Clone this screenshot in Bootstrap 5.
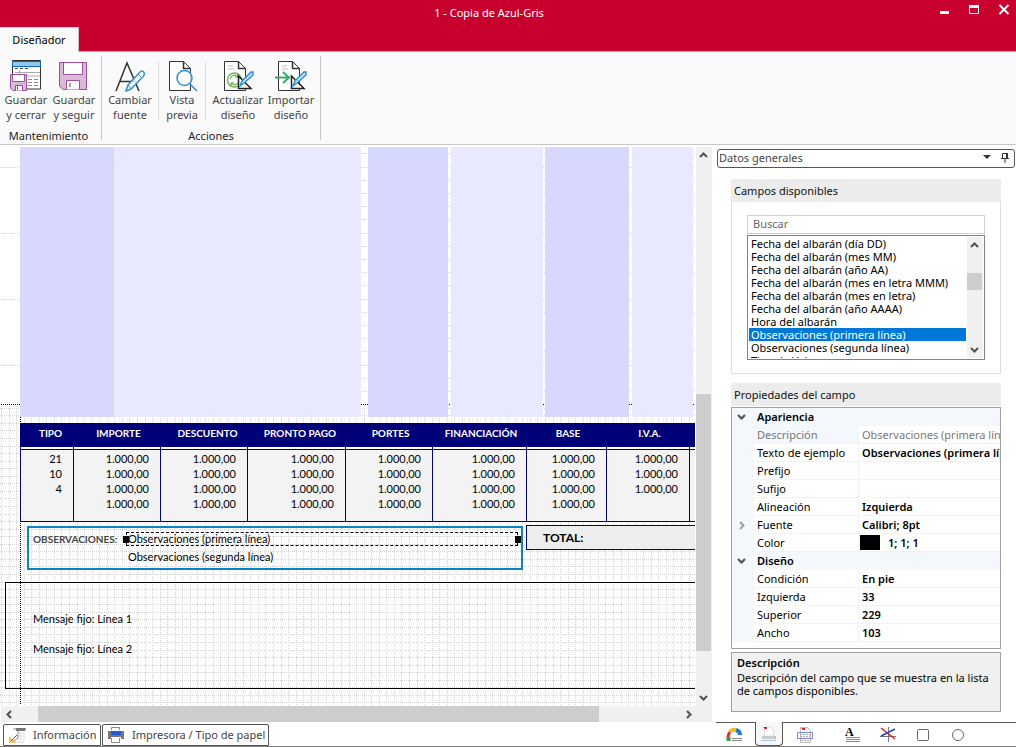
<!DOCTYPE html>
<html lang="es">
<head>
<meta charset="utf-8">
<meta name="viewport" content="width=device-width, initial-scale=1">
<title>1 - Copia de Azul-Gris</title>
<link href="https://cdn.jsdelivr.net/npm/bootstrap@5.3.0/dist/css/bootstrap.min.css" rel="stylesheet">
<style>
:root{--red:#c8002d;--navy:#000078;--line:#c6c6c6}
body{font-family:"Noto Sans","Open Sans",sans-serif;font-size:11px;line-height:15px;color:#000;background:#fff}
button{font:inherit;color:inherit;background:none;border:0;padding:0}
svg{display:block;flex:none}
.app{min-height:100vh;border-bottom:1px solid #808080}
.titlebar{background:var(--red);color:#fff;height:27px}
.titlebar .side-l{width:54px}.titlebar .side-r{width:92px;padding:4px 6px 0 14px}
.title{padding-top:5px}
.tabrow{background:var(--red);height:25px}
.tabrow .grow-line{border-bottom:1px solid #c9a9b0}
.tab-main{width:79px;background:#fafafa;border-top:1px solid #ddd;border-right:1px solid var(--line);padding-bottom:2px}
.ribbon{background:#fafafa;border-bottom:1px solid var(--line);height:93px;padding-top:4px}
.rgroup{border-right:1px solid var(--line);height:84px}
.rbtn{display:flex;flex-direction:column;align-items:center;color:#444;text-align:center;padding-top:4px}
.w48{width:48px}.w56{width:56px}.w44{width:46px}
.rcap{color:#222;margin-top:6px;text-align:center}
.rsep{width:1px;height:58px;background:#dcdcdc;margin-top:6px}
.left{padding-top:2px;min-width:0}
.viewport{overflow:hidden;min-width:0}
.gridbg{position:absolute;left:0;top:0;z-index:0}
.sheet{width:1000px;position:relative;z-index:1;font-family:Lato,sans-serif;font-size:11px}
.bands{height:270px;padding-left:20px}
.bands div{height:270px}
.dk{background:#d8d8ff}.lt{background:#e8e8ff}
.tax{table-layout:fixed;width:759px;margin:6px 0 0 20px;border-collapse:separate;border-spacing:0;background:#f3f3f3;border-bottom:1px solid var(--navy)}
.tax th{background:var(--navy);color:#fff;height:24px;text-align:center;padding:0 0 4px 4px;font-size:10px}
.tax td{border-left:1px solid var(--navy);text-align:right;padding:0 11px 0 0;height:15px;line-height:15px}
.tax .gap td{height:3px;line-height:0;background:#fff;border-bottom:1px solid var(--navy)}
.tax .first td{padding-top:1px}.tax .last td{padding-bottom:10px;height:25px}
.obsrow{margin-top:3px;padding-left:27px}
.obs{width:496px;height:44px;border:2px solid #0a84c6;margin-top:1px;padding:4px 2px 0 4px}
.obs-lab{color:#444;font-weight:700;font-size:10px;width:93px;line-height:14px}
.selbox{width:392px;height:14px;line-height:12px;border:1px dashed #000;padding-left:1px;position:relative}
.selbox::before,.selbox::after{content:"";position:absolute;width:6px;height:7px;background:#000;top:3px}
.selbox::before{left:-4px}.selbox::after{right:-4px}
.obs2{margin:4px 0 0 95px;line-height:14px}
.total{width:300px;height:25px;border:1px solid #000090;background:#eee;margin-left:3px;padding-left:16px;font-weight:700;font-size:12px;line-height:24px}
.fixedbox{border:1px solid #000;margin:12px 0 0 5px;height:107px;padding:28px 0 0 27px}
.fixedbox p{margin:0 0 15px}
.sbv{width:16px;background:#f0f0f0;margin-left:1px}
.sbh{height:16px;background:#f0f0f0;margin-left:1px}
.thumb{background:#cdcdcd}
.sbtn{width:15px;height:16px;display:flex;align-items:center;justify-content:center;flex:none}
.btabs{padding:2px 0 0 3px;gap:1px;height:24px}
.btab{border:1px solid #555;border-radius:2px 2px 0 0;display:flex;align-items:center;color:#444;height:22px;padding-bottom:1px}
.right{width:300px;padding-top:4px;margin-left:4px}
.dock{height:19px;border:1px solid #555;border-radius:3px;color:#444;margin:0 1px;padding:0 3px 2px 1px}
.pbox{margin:0 15px}
.phead{background:#ececec;height:23px;line-height:23px;padding-left:3px;font-size:11px;font-weight:400;margin:0;color:#111}
.pbody{border:1px solid #ddd;border-top:0;padding:13px 15px}
.search{width:100%;height:19px;border:1px solid #d0d0d0;padding:0 5px 2px;outline:0;display:block;border-radius:0}
.search::placeholder{color:#666;opacity:1}
.lbox{border:1px solid #82828f;margin-top:1px;height:125px;padding:1px}
.lbox ul{overflow:hidden;height:121px}
.lbox li{line-height:13px;height:13px;padding-left:2px;white-space:nowrap}
.lbox .sel{background:#0078d7;color:#fff}
.pg{border:1px solid #a0a0a0;margin-top:1px;height:242px;overflow:hidden}
.pg table{width:100%;table-layout:fixed;border-collapse:separate;border-spacing:0}
.pg td,.pg th{height:18px;line-height:17px;padding:0 0 0 3px;white-space:nowrap;overflow:hidden;font-weight:400}
.pg th{text-align:left}
.pg tr>:first-child{background:#f4f7fc;padding:0 0 0 5px}
.pg .cat th{background:#f4f7fc;font-weight:600;padding-bottom:1px}
.pg .it th,.pg .it td:last-child{border-bottom:1px solid #f0f3fa}
.pg .it td:last-child{border-left:1px solid #f0f3fa;font-weight:600}
.pg .ro th{background:#f4f7fc;color:#777}.pg .it.ro td:last-child{color:#777;font-weight:400}
.swatch{display:inline-block;width:20px;height:15px;background:#000;margin:1px 8px 0 -2px;vertical-align:top}
.desc{border:1px solid #a0a0a0;background:#f0f0f0;height:60px;margin-top:3px;padding:2px 5px;line-height:13px}
.desc b{display:block;line-height:16px;font-weight:600}
.icotabs{border-top:1px solid #555;height:24px;margin-top:10px}
.ico{display:flex;justify-content:center;padding-top:4px;width:35px;height:23px}
.ico.on{border:1px solid #555;border-top:0;border-radius:0 0 4px 4px;background:#f7f7fb;margin-top:-1px;width:28px;height:24px}
.ico-gap{margin-left:13px}
</style>
</head>
<body>
<svg width="0" height="0" class="position-absolute"><defs>
<symbol id="up" viewBox="0 0 9 6"><path d="M1 5 4.500 1.500 8 5" fill="none" stroke="#505050" stroke-width="2"/></symbol>
<symbol id="dn" viewBox="0 0 9 6"><path d="M1 1 4.500 4.500 8 1" fill="none" stroke="#505050" stroke-width="2"/></symbol>
<symbol id="floppy" viewBox="0 0 28 28"><path d="M.5.5h27v27H4L.5 24z" fill="#dcb8d8" stroke="#9b4f9b"/><path d="M4.500.5h19v12h-19zM7.500 27.500v-9h13v9" fill="#fff" stroke="#9b4f9b"/><path d="M11 21v4" stroke="#444"/></symbol>
<symbol id="page" viewBox="0 0 22 30"><path d="M.5.5h14l7 7v22H.5z" fill="#fff" stroke="#333"/><path d="M14.500.5v7h7" fill="none" stroke="#333" stroke-width="1.500"/></symbol>
</defs></svg>
<div class="app d-flex flex-column">
<header>
  <div class="titlebar d-flex">
    <span class="side-l"></span>
    <div class="flex-grow-1 text-center title">1 - Copia de Azul-Gris</div>
    <div class="side-r d-flex justify-content-between align-items-start">
      <button aria-label="Minimizar"><svg width="12" height="12"><path d="M2 7h9v3H2z" fill="#fff"/></svg></button>
      <button aria-label="Maximizar"><svg width="12" height="12"><path d="M1.500 2v7.500h9V2" fill="none" stroke="#fff"/><path d="M1 1h10v3H1z" fill="#fff"/></svg></button>
      <button aria-label="Cerrar"><svg width="12" height="12"><path d="M1.500 1l9 9m0-9l-9 9" stroke="#fff" stroke-width="2"/></svg></button>
    </div>
  </div>
  <nav class="tabrow d-flex"><button class="tab-main">Diseñador</button><span class="flex-grow-1 grow-line"></span></nav>
  <div class="ribbon d-flex">
    <section class="rgroup" style="width:102px">
      <div class="d-flex">
        <button class="rbtn w48 ps-1"><svg width="32" height="32"><path d="M2.500.5h28v28.500h-28z" fill="#fff" stroke="#333"/><path d="M2.500 1.500h28v5h-28z" fill="#90c8f0" stroke="#1268b0"/><path d="M5 12.500h25M9.500 10v19M10 16h20" stroke="#aaa"/><path d="M5 8.500h3m2 0h3m2 0h3" stroke="#444"/><path d="M18 19.500h10m-10 3h10m-10 3h10" stroke="#888" stroke-dasharray="4 2"/><path d="M.5 14.500h16v16H3L.5 28z" fill="#dcb8d8" stroke="#9b4f9b"/><path d="M2.500 14.500h12v7h-12zM5.500 30.500v-5h7v5" fill="#fff" stroke="#9b4f9b"/><path d="M7.500 26.500v3" stroke="#444"/></svg><span>Guardar<br>y cerrar</span></button>
        <button class="rbtn w48 ps-1"><svg width="32" height="32"><use href="#floppy" x="1" y="2" width="28" height="28"/></svg><span>Guardar<br>y seguir</span></button>
      </div>
      <div class="rcap pe-1">Mantenimiento</div>
    </section>
    <section class="rgroup" style="width:219px">
      <div class="d-flex">
        <button class="rbtn w56"><svg width="32" height="32"><path d="M2 31 13 3l12 28M6 21.500h14" fill="none" stroke="#333" stroke-width="1.500"/><path d="M12 31l2-6 12-13q3-2 4 .5t-1 4L17 29z" fill="#fff" fill-opacity=".8" stroke="#3090d0" stroke-width="1.500"/><path d="M14 25l3 4M24 14l3 3" stroke="#3090d0"/></svg><span>Cambiar<br>fuente</span></button>
        <span class="rsep"></span>
        <button class="rbtn w44"><svg width="32" height="32"><use href="#page" x="3" y="1" width="22" height="30"/><circle cx="18.500" cy="18" r="7.500" fill="#fff" fill-opacity=".75" stroke="#3090d0" stroke-width="1.500"/><path d="M24 24l7 7" stroke="#3090d0" stroke-width="1.500"/></svg><span>Vista<br>previa</span></button>
        <span class="rsep me-1"></span>
        <button class="rbtn w56"><svg width="32" height="32"><use href="#page" x="2" y="1" width="22" height="30"/><path d="M6 6h5m-5 3h6" stroke="#bbb"/><circle cx="12.500" cy="20" r="7" fill="#fff" stroke="#70b850" stroke-width="1.500"/><path d="M8 19q1-4 5-4l3 2m0-3v3h-3M17 21q-1 4-5 4l-3-2m0 3v-3h3" fill="none" stroke="#50a030"/><path d="M16.500 16v12.500h12.500z" fill="#fff" stroke="#222" stroke-width="1.500"/><path d="M18 26l2-5 9-9h2v3l-9 8z" fill="#c8e4fa" stroke="#3090d0" stroke-width="1.500"/></svg><span>Actualizar<br>diseño</span></button>
        <button class="rbtn" style="width:50px"><svg width="32" height="32"><use href="#page" x="3" y="1" width="22" height="30"/><path d="M7 6h5m-5 3h6" stroke="#bbb"/><path d="M0 17.500h13M8 12l6 5.500L8 23" fill="none" stroke="#38a868" stroke-width="2"/><path d="M16.500 16v12.500h12.500z" fill="#fff" stroke="#222" stroke-width="1.500"/><path d="M18 26l2-5 9-9h2v3l-9 8z" fill="#c8e4fa" stroke="#3090d0" stroke-width="1.500"/></svg><span>Importar<br>diseño</span></button>
      </div>
      <div class="rcap">Acciones</div>
    </section>
  </div>
</header>

<div class="d-flex flex-grow-1">
<main class="left d-flex flex-column flex-grow-1">
  <div class="d-flex flex-grow-1">
    <div class="viewport flex-grow-1 position-relative" style="width:0">
      <svg class="gridbg" width="100%" height="100%" shape-rendering="crispEdges">
        <defs>
          <pattern id="gp" x="24" y="19" width="68" height="68" patternUnits="userSpaceOnUse"><path d="M.5 0v68M7.500 0v68M15.500 0v68M22.500 0v68M30.500 0v68M37.500 0v68M45.500 0v68M53.500 0v68M60.500 0v68M0 .5h68M0 8.500h68M0 15.500h68M0 23.500h68M0 30.500h68M0 38.500h68M0 45.500h68M0 53.500h68M0 60.500h68" stroke="#d4d4d4" stroke-dasharray="1 1"/></pattern>
          <pattern id="gm" y="20" width="2" height="66" patternUnits="userSpaceOnUse"><path d="M1 0h1v1H1z" fill="#d4d4d4"/></pattern>
          <pattern id="gf" y="20" width="2" height="66" patternUnits="userSpaceOnUse"><path d="M1 0h1v1H1zM0 13h1v1H0zM0 26h1v1H0zM0 39h1v1H0zM0 52h1v1H0z" fill="#d4d4d4"/></pattern>
        </defs>
        <rect width="20" height="257" fill="url(#gm)"/><rect x="360" width="100%" height="257" fill="url(#gf)"/>
        <rect y="258" width="100%" height="300" fill="url(#gp)"/>
        <path d="M1 257.500h2000M20.500 258v299" stroke="#000" stroke-dasharray="1 1"/>
      </svg>
      <div class="sheet">
        <div class="bands d-flex">
          <div class="dk" style="width:94px"></div><div class="lt" style="width:247px"></div>
          <div class="dk" style="width:80px;margin-left:7px"></div><div class="lt" style="width:92px;margin-left:3px"></div>
          <div class="dk" style="width:84px;margin-left:2px"></div><div class="lt" style="width:61px;margin-left:3px"></div>
        </div>
        <table class="tax">
          <colgroup><col style="width:53px"><col style="width:87px"><col style="width:87px"><col style="width:98px"><col style="width:87px"><col style="width:94px"><col style="width:80px"><col style="width:83px"><col></colgroup>
          <thead><tr><th class="ps-2">TIPO</th><th>IMPORTE</th><th class="ps-2">DESCUENTO</th><th class="ps-2">PRONTO PAGO</th><th>PORTES</th><th>FINANCIACIÓN</th><th>BASE</th><th>I.V.A.</th><th></th></tr></thead>
          <tbody>
          <tr class="gap"><td></td><td></td><td></td><td></td><td></td><td></td><td></td><td></td><td></td></tr>
          <tr class="first"><td>21</td><td>1.000,00</td><td>1.000,00</td><td>1.000,00</td><td>1.000,00</td><td>1.000,00</td><td>1.000,00</td><td>1.000,00</td><td></td></tr>
          <tr><td>10</td><td>1.000,00</td><td>1.000,00</td><td>1.000,00</td><td>1.000,00</td><td>1.000,00</td><td>1.000,00</td><td>1.000,00</td><td></td></tr>
          <tr><td>4</td><td>1.000,00</td><td>1.000,00</td><td>1.000,00</td><td>1.000,00</td><td>1.000,00</td><td>1.000,00</td><td>1.000,00</td><td></td></tr>
          <tr class="last"><td></td><td>1.000,00</td><td>1.000,00</td><td>1.000,00</td><td>1.000,00</td><td>1.000,00</td><td>1.000,00</td><td></td><td></td></tr>
          </tbody>
        </table>
        <div class="d-flex obsrow">
          <div class="obs">
            <div class="d-flex"><span class="obs-lab">OBSERVACIONES:</span><div class="selbox">Observaciones (primera línea)</div></div>
            <div class="obs2">Observaciones (segunda línea)</div>
          </div>
          <div class="total">TOTAL:</div>
        </div>
        <div class="fixedbox"><p>Mensaje fijo: Línea 1</p><p>Mensaje fijo: Línea 2</p></div>
      </div>
    </div>
    <div class="sbv d-flex flex-column">
      <button class="sbtn" aria-label="Subir"><svg width="9" height="6"><use href="#up"/></svg></button>
      <span style="flex:231"></span><span class="thumb" style="flex:256;margin-right:1px"></span><span style="flex:39"></span>
      <button class="sbtn" aria-label="Bajar"><svg width="9" height="6"><use href="#dn"/></svg></button>
    </div>
  </div>
  <div class="sbh d-flex">
    <button class="sbtn" aria-label="Izquierda"><svg width="6" height="9"><path d="M5 1 1.500 4.500 5 8" fill="none" stroke="#505050" stroke-width="2"/></svg></button>
    <span style="flex:22"></span><span class="thumb" style="flex:560"></span><span style="flex:82"></span>
    <button class="sbtn me-3" aria-label="Derecha"><svg width="6" height="9"><path d="M1 1l3.500 3.500L1 8" fill="none" stroke="#505050" stroke-width="2"/></svg></button>
  </div>
  <nav class="btabs d-flex">
    <button class="btab" style="width:98px"><svg width="29" height="18"><path d="M9 3h5v9l-4 3" fill="none" stroke="#888"/><path d="M12 2h10l-1 3h-9z" fill="#777"/><path d="M15 7h6m-6 3h6m-6 3h6m-8 3h8" stroke="#ccc" stroke-dasharray="3 1"/><path d="M5 10v7h8z" fill="#f5c468"/><path d="M7 15l6-6" stroke="#2868b0"/></svg>Información</button>
    <button class="btab" style="width:167px"><svg width="29" height="18"><path d="M8.500 4V1.500h8V4M8.500 12v4.500h8V12" fill="#fff" stroke="#888"/><path d="M5 5h16v8h-3v-2H8v2H5z" fill="#777"/><path d="M8 5h10v4H8z" fill="#2858d0"/></svg>Impresora / Tipo de papel</button>
  </nav>
</main>

<aside class="right d-flex flex-column">
  <div class="dock d-flex align-items-center"><span class="flex-grow-1">Datos generales</span><svg width="8" height="5" class="me-1"><path d="M0 0h8L4 4z" fill="#333"/></svg><svg width="12" height="12" class="ms-1"><path d="M2 6.500h8M3.500 6V1.500h5V6M6 7v4" fill="none" stroke="#333"/><path d="M8 1v5" stroke="#333" stroke-width="2"/></svg></div>
  <section class="pbox" style="margin-top:11px">
    <h2 class="phead">Campos disponibles</h2>
    <div class="pbody">
      <input class="search" type="text" placeholder="Buscar" aria-label="Buscar">
      <div class="lbox d-flex">
        <ul class="list-unstyled mb-0 flex-grow-1">
          <li>Fecha del albarán (día DD)</li><li>Fecha del albarán (mes MM)</li><li>Fecha del albarán (año AA)</li><li>Fecha del albarán (mes en letra MMM)</li><li>Fecha del albarán (mes en letra)</li><li>Fecha del albarán (año AAAA)</li><li>Hora del albarán</li><li class="sel">Observaciones (primera línea)</li><li>Observaciones (segunda línea)</li><li>Tipo de Valor</li>
        </ul>
        <div class="sbv d-flex flex-column">
          <button class="sbtn" aria-label="Subir lista"><svg width="9" height="6"><use href="#up"/></svg></button>
          <span style="flex:20"></span><span class="thumb" style="flex:17;margin-right:1px"></span><span style="flex:52"></span>
          <button class="sbtn" aria-label="Bajar lista"><svg width="9" height="6"><use href="#dn"/></svg></button>
        </div>
      </div>
    </div>
  </section>
  <section class="pbox" style="margin-top:9px">
    <h2 class="phead">Propiedades del campo</h2>
    <div class="pg">
      <table>
        <colgroup><col style="width:22px"><col style="width:104px"><col></colgroup>
        <tbody>
        <tr class="cat"><td><svg width="9" height="6"><use href="#dn"/></svg></td><th colspan="2">Apariencia</th></tr>
        <tr class="it ro"><td></td><th>Descripción</th><td>Observaciones (primera línea)</td></tr>
        <tr class="it"><td></td><th>Texto de ejemplo</th><td>Observaciones (primera línea)</td></tr>
        <tr class="it"><td></td><th>Prefijo</th><td></td></tr>
        <tr class="it"><td></td><th>Sufijo</th><td></td></tr>
        <tr class="it"><td></td><th>Alineación</th><td>Izquierda</td></tr>
        <tr class="it"><td><svg width="9" height="9"><path d="M3 1l3.500 3.500L3 8" fill="none" stroke="#a0a0a0" stroke-width="2"/></svg></td><th>Fuente</th><td>Calibri; 8pt</td></tr>
        <tr class="it"><td></td><th>Color</th><td><span class="swatch"></span>1; 1; 1</td></tr>
        <tr class="cat"><td><svg width="9" height="6"><use href="#dn"/></svg></td><th colspan="2">Diseño</th></tr>
        <tr class="it"><td></td><th>Condición</th><td>En pie</td></tr>
        <tr class="it"><td></td><th>Izquierda</th><td>33</td></tr>
        <tr class="it"><td></td><th>Superior</th><td>229</td></tr>
        <tr class="it"><td></td><th>Ancho</th><td>103</td></tr>
        </tbody>
      </table>
    </div>
    <div class="desc"><b>Descripción</b>Descripción del campo que se muestra en la lista de campos disponibles.</div>
  </section>
  <nav class="icotabs d-flex">
    <button class="ico" aria-label="Colores"><svg width="16" height="16"><path d="M2 11q0-4 2-6" fill="none" stroke="#e03020" stroke-width="3"/><path d="M2.500 10v4" stroke="#30a040" stroke-width="4"/><path d="M4 5q2-3 6-2" fill="none" stroke="#f0c020" stroke-width="4"/><path d="M10 3q4 1 4 5" fill="none" stroke="#2878d0" stroke-width="4"/><path d="M6 11.500h10M6 13.500h10" stroke="#888"/></svg></button>
    <button class="ico on ms-1" aria-label="Campos"><svg width="16" height="16"><path d="M3.500 1v9h9V4l-3-3z" fill="#fff" stroke="#ddd"/><path d="M2 1h4v2H4z" fill="#e02020"/><path d="M1 10h13v3H1z" fill="#ccc"/><path d="M0 14.500h14.500V10" fill="none" stroke="#a0c8e8"/></svg></button>
    <button class="ico ms-1" aria-label="Secciones"><svg width="16" height="16"><path d="M3.500.5h7l3 3v12h-10z" fill="#fff" stroke="#bbb"/><path d="M4 1h4v2H6z" fill="#e02020"/><path d="M.5 5.500h15v6H.5z" fill="none" stroke="#8080d8"/><path d="M3 7.500h10M3 9.500h10M4 13.500h9" stroke="#aaa" stroke-dasharray="2 1"/></svg></button>
    <button class="ico ico-gap" aria-label="Texto"><svg width="16" height="16"><path d="M1 10.500h14M1 12.500h14M1 14.500h14" stroke="#888"/><text x="0" y="9" font-family="Liberation Serif,serif" font-weight="700" font-size="12">A</text></svg></button>
    <button class="ico" aria-label="Línea"><svg width="16" height="16"><path d="M8.500 0v15M0 9.500h16" stroke="#777"/><path d="M1 1l14 11" stroke="#e02020" stroke-width="1.500"/><path d="M15 2L1 9" stroke="#2040d0" stroke-width="1.500"/></svg></button>
    <button class="ico" aria-label="Rectángulo"><svg width="16" height="16"><rect x="2.500" y="2.500" width="11" height="11" rx="1" fill="none" stroke="#666"/></svg></button>
    <button class="ico" aria-label="Elipse"><svg width="16" height="16"><circle cx="8" cy="8" r="5.500" fill="none" stroke="#666"/></svg></button>
  </nav>
</aside>
</div>
</div>
<script src="https://cdn.jsdelivr.net/npm/bootstrap@5.3.0/dist/js/bootstrap.bundle.min.js"></script>
</body>
</html>
